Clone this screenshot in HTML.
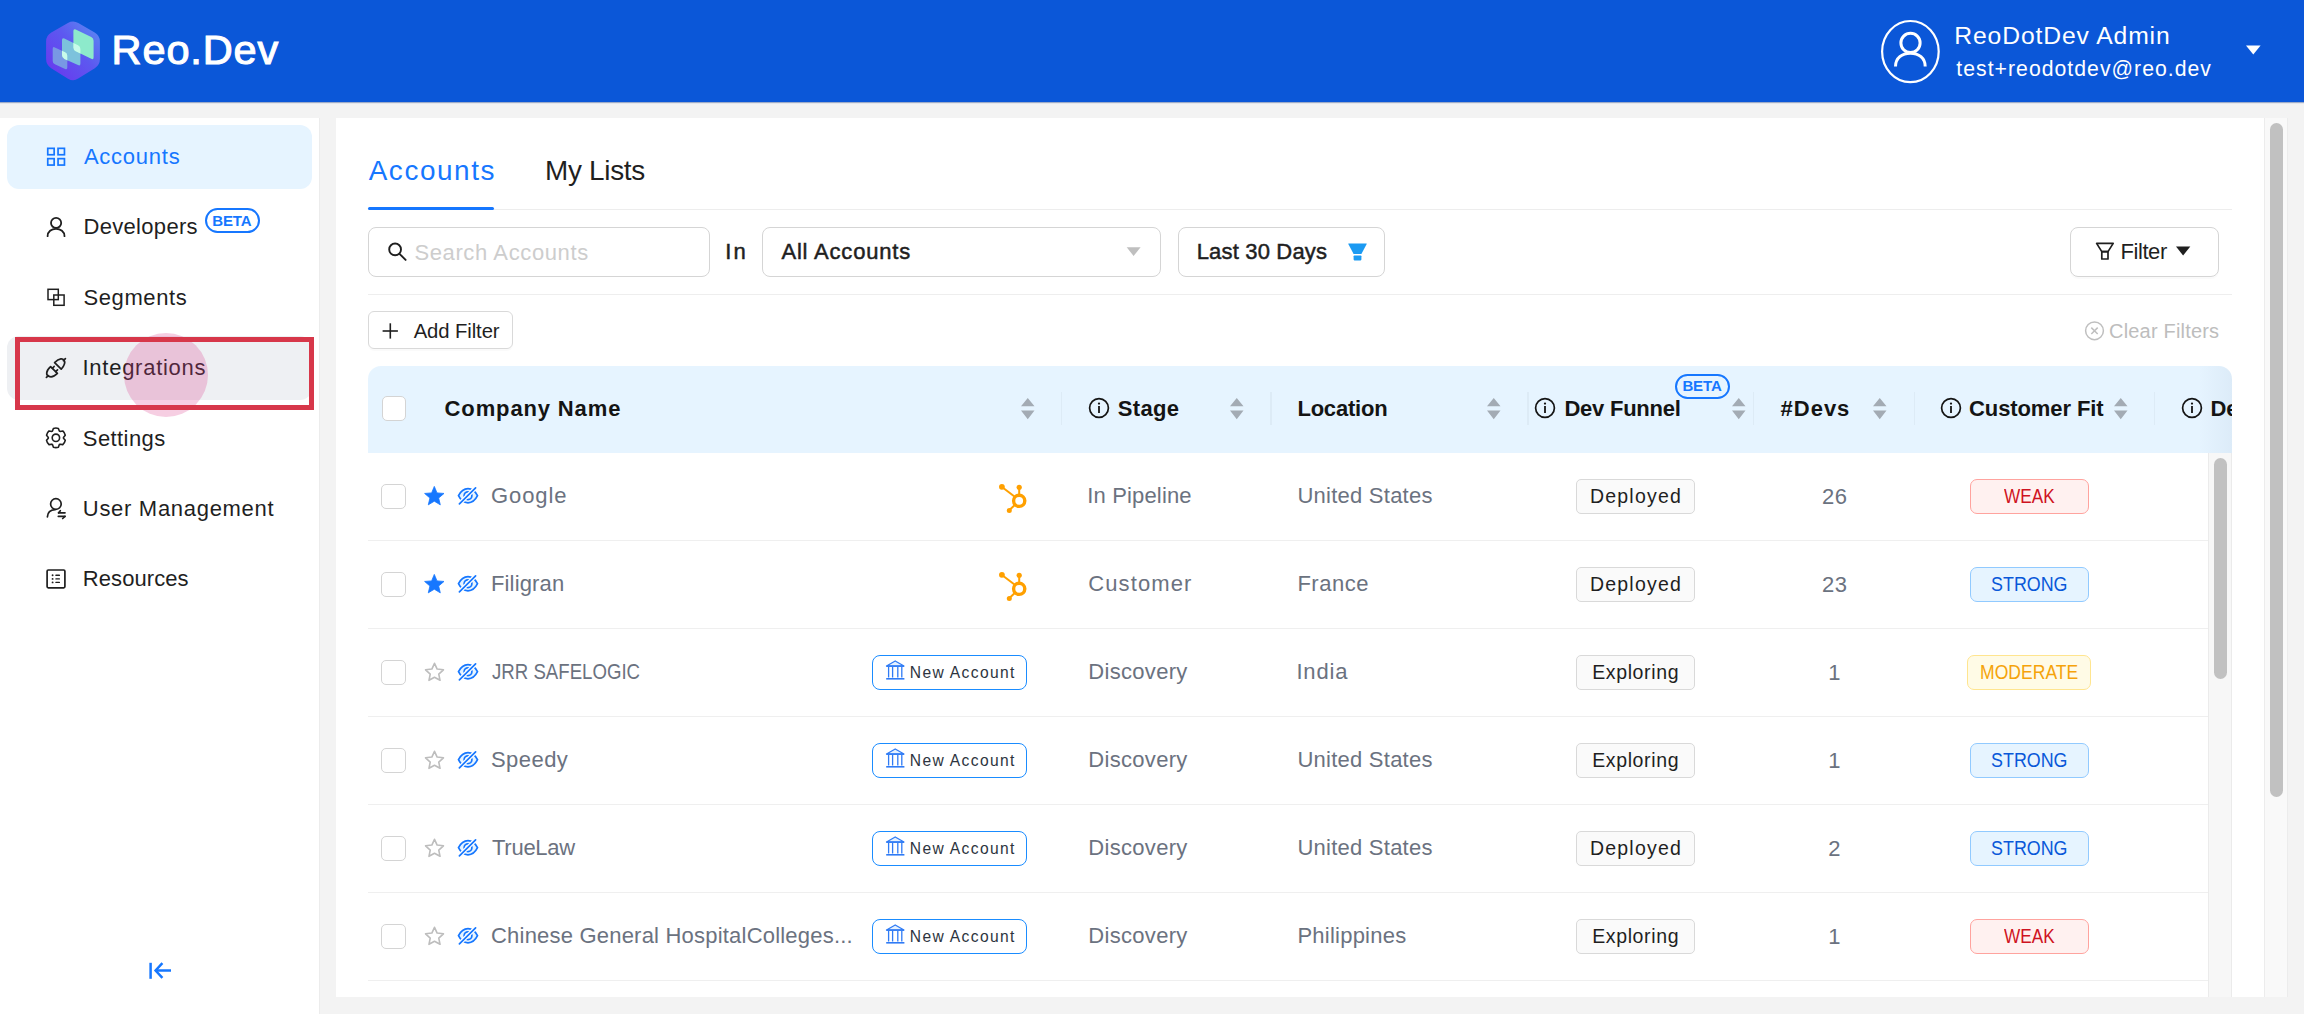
<!DOCTYPE html>
<html><head><meta charset="utf-8"><style>
html,body{margin:0;padding:0;}
body{width:2304px;height:1014px;overflow:hidden;position:relative;background:#f3f3f3;font-family:"Liberation Sans",sans-serif;}
.t{position:absolute;white-space:nowrap;line-height:1;}
svg{overflow:visible;}
</style></head><body>
<div style="position:absolute;left:0.00px;top:0.00px;width:2304.00px;height:102.00px;box-sizing:border-box;background:#0b57d8;box-shadow:0 1px 1px rgba(0,40,120,0.35);"></div>
<div style="position:absolute;left:0.00px;top:118.00px;width:318.50px;height:896.00px;box-sizing:border-box;background:#fff;border-right:1.5px solid #ececec;width:320px;"></div>
<div style="position:absolute;left:336.00px;top:118.00px;width:1928.00px;height:879.00px;box-sizing:border-box;background:#fff;"></div>
<div style="position:absolute;left:2264.00px;top:118.00px;width:24.00px;height:879.00px;box-sizing:border-box;background:#f9f9f9;border-left:1px solid #ececec;border-right:1px solid #ececec;"></div>
<div style="position:absolute;left:2270.00px;top:123.00px;width:13.30px;height:674.00px;box-sizing:border-box;background:#c1c1c1;border-radius:7px;"></div>
<svg style="position:absolute;left:46px;top:21px;" width="60" height="64" viewBox="0 0 60 64">
<defs><linearGradient id="hg" x1="0" y1="1" x2="1" y2="0"><stop offset="0" stop-color="#6b33ee"/><stop offset="0.55" stop-color="#5d58f0"/><stop offset="1" stop-color="#5b90f2"/></linearGradient>
<clipPath id="cg"><path d="M73.40 31.00 Q73.40 28.40 75.74 29.53 L91.26 37.07 Q93.60 38.20 93.60 40.80 L93.60 57.40 Q93.60 60.00 91.26 58.87 L75.74 51.33 Q73.40 50.20 73.40 47.60 Z"/></clipPath><clipPath id="cm"><path d="M62.00 40.00 Q62.00 37.40 64.34 38.54 L78.06 45.26 Q80.40 46.40 80.40 49.00 L80.40 63.60 Q80.40 66.20 78.03 65.12 L64.37 58.88 Q62.00 57.80 62.00 55.20 Z"/></clipPath></defs>
<g transform="translate(-46,-21)">
<path d="M67.89 22.97 Q73.10 20.00 78.30 22.99 L94.70 32.41 Q99.90 35.40 99.90 41.40 L99.90 59.00 Q99.90 65.00 94.82 68.19 L78.18 78.61 Q73.10 81.80 68.01 78.63 L51.19 68.17 Q46.10 65.00 46.10 59.00 L46.10 41.40 Q46.10 35.40 51.31 32.43 Z" fill="url(#hg)"/>
<path d="M52.70 48.80 Q52.70 46.40 54.87 47.43 L65.13 52.27 Q67.30 53.30 67.30 55.70 L67.30 67.60 Q67.30 70.00 65.12 69.00 L54.88 64.30 Q52.70 63.30 52.70 60.90 Z" fill="#7898e4"/>
<path d="M62.00 40.00 Q62.00 37.40 64.34 38.54 L78.06 45.26 Q80.40 46.40 80.40 49.00 L80.40 63.60 Q80.40 66.20 78.03 65.12 L64.37 58.88 Q62.00 57.80 62.00 55.20 Z" fill="#7cc2dc"/>
<path d="M73.40 31.00 Q73.40 28.40 75.74 29.53 L91.26 37.07 Q93.60 38.20 93.60 40.80 L93.60 57.40 Q93.60 60.00 91.26 58.87 L75.74 51.33 Q73.40 50.20 73.40 47.60 Z" fill="#8deacb"/>
<path d="M62.00 40.00 Q62.00 37.40 64.34 38.54 L78.06 45.26 Q80.40 46.40 80.40 49.00 L80.40 63.60 Q80.40 66.20 78.03 65.12 L64.37 58.88 Q62.00 57.80 62.00 55.20 Z" fill="#c8fcea" clip-path="url(#cg)"/>
<path d="M52.70 48.80 Q52.70 46.40 54.87 47.43 L65.13 52.27 Q67.30 53.30 67.30 55.70 L67.30 67.60 Q67.30 70.00 65.12 69.00 L54.88 64.30 Q52.70 63.30 52.70 60.90 Z" fill="#c8fcea" clip-path="url(#cm)"/>
</g></svg>
<div class="t" style="left:111.60px;top:29.00px;font-size:41.5px;color:#fff;letter-spacing:0.867px;-webkit-text-stroke:1.1px #fff;">Reo.Dev</div>
<svg style="position:absolute;left:1878px;top:17px;" width="66" height="70" viewBox="0 0 66 70"><ellipse cx="32.4" cy="34.6" rx="28.3" ry="30.6" fill="none" stroke="#fff" stroke-width="2.2"/>
<circle cx="32.5" cy="25.9" r="9.6" fill="none" stroke="#fff" stroke-width="3"/>
<path d="M17.5 49.6 C17.5 41 24 36.2 32.4 36.2 C40.8 36.2 47.2 41 47.2 49.6" fill="none" stroke="#fff" stroke-width="3"/></svg>
<div class="t" style="left:1954.30px;top:24.00px;font-size:24.7px;color:#fff;letter-spacing:0.879px;">ReoDotDev Admin</div>
<div class="t" style="left:1956.30px;top:58.00px;font-size:21.2px;color:#fff;letter-spacing:1.033px;">test+reodotdev@reo.dev</div>
<svg style="position:absolute;left:2240px;top:40px;" width="26" height="20" viewBox="0 0 26 20"><path d="M6 5.6 L20.6 5.6 L13.3 14.5 Z" fill="#fff"/></svg>
<div style="position:absolute;left:6.50px;top:124.70px;width:305.50px;height:64.00px;box-sizing:border-box;background:#e6f4ff;border-radius:12px;"></div>
<div style="position:absolute;left:6.50px;top:335.50px;width:305.50px;height:64.00px;box-sizing:border-box;background:#eef0f3;border-radius:12px;"></div>
<svg style="position:absolute;left:40px;top:141px;" width="32" height="32" viewBox="0 0 32 32"><g fill="none" stroke="#1677ff" stroke-width="1.7">
<rect x="7.75" y="7.35" width="6.4" height="6.4"/><rect x="18.05" y="7.35" width="6.4" height="6.4"/>
<rect x="7.75" y="17.65" width="6.4" height="6.4"/><rect x="18.05" y="17.65" width="6.4" height="6.4"/></g></svg>
<svg style="position:absolute;left:40px;top:210px;" width="32" height="32" viewBox="0 0 32 32"><g fill="none" stroke="#1f1f1f" stroke-width="1.8" stroke-linecap="round">
<circle cx="16.1" cy="12.9" r="5.1"/>
<path d="M7.6 26.2 C7.6 21.6 11.4 18.8 16 18.8 C20.6 18.8 24.5 21.6 24.5 26.2"/></g></svg>
<svg style="position:absolute;left:40px;top:281px;" width="32" height="32" viewBox="0 0 32 32"><g fill="none" stroke="#1f1f1f" stroke-width="1.5">
<rect x="8" y="8.3" width="10.3" height="10.3"/><rect x="13.8" y="14" width="10.3" height="10.3"/></g></svg>
<svg style="position:absolute;left:40px;top:352px;" width="32" height="32" viewBox="0 0 32 32"><g fill="none" stroke="#1f1f1f" stroke-width="1.7" stroke-linecap="round" stroke-linejoin="round">
<path d="M10.6 14.6 C5 19.6 6.5 23.5 8.6 24.2 C11 25.4 14.6 24.2 17.4 21.4 Z"/>
<path d="M8.4 23.6 L6.4 25.4"/><path d="M12.4 16.4 L14.1 14.5"/><path d="M15.6 19.6 L17.5 17.8"/>
<path d="M14.6 10.6 C19.6 5.4 23 6.6 24 8 C25.4 10.2 24.6 13.4 21.2 17.2 Z"/>
<path d="M23.4 8.6 L25.4 6.6"/></g></svg>
<svg style="position:absolute;left:40px;top:422px;" width="32" height="32" viewBox="0 0 32 32"><g fill="none" stroke="#1f1f1f" stroke-width="1.6" stroke-linejoin="round">
<path d="M12.46 9.02 L13.41 6.43 Q15.90 5.60 18.39 6.43 L19.34 9.02 A7.6 7.6 0 0 1 20.05 9.43 L22.77 8.95 Q24.73 10.70 25.26 13.27 L23.49 15.39 A7.6 7.6 0 0 1 23.49 16.21 L25.26 18.33 Q24.73 20.90 22.77 22.65 L20.05 22.17 A7.6 7.6 0 0 1 19.34 22.58 L18.39 25.17 Q15.90 26.00 13.41 25.17 L12.46 22.58 A7.6 7.6 0 0 1 11.75 22.17 L9.03 22.65 Q7.07 20.90 6.54 18.33 L8.31 16.21 A7.6 7.6 0 0 1 8.31 15.39 L6.54 13.27 Q7.07 10.70 9.03 8.95 L11.75 9.43 A7.6 7.6 0 0 1 12.46 9.02 Z"/><circle cx="15.9" cy="15.8" r="3.7"/></g></svg>
<svg style="position:absolute;left:40px;top:492px;" width="32" height="32" viewBox="0 0 32 32"><g fill="none" stroke="#1f1f1f" stroke-width="1.7" stroke-linecap="round" stroke-linejoin="round">
<circle cx="15.9" cy="12" r="5.3"/>
<path d="M7.4 24.9 C7.6 20.6 10.6 17.8 15.1 17.6"/>
<path d="M18.6 20.8 L25 20.8"/><path d="M18.6 20.8 L20.3 18.7"/>
<path d="M18.3 24.3 L25 24.3"/><path d="M25 24.3 L22.7 26.5"/></g></svg>
<svg style="position:absolute;left:40px;top:563px;" width="32" height="32" viewBox="0 0 32 32"><g fill="none" stroke="#1f1f1f" stroke-width="1.7">
<rect x="7.1" y="7" width="17.8" height="17.8" rx="1.2"/></g>
<g fill="#1f1f1f"><circle cx="12.6" cy="12.3" r="0.95"/><circle cx="12.6" cy="15.9" r="0.95"/><circle cx="12.6" cy="19.4" r="0.95"/>
<rect x="15.3" y="11.6" width="4.7" height="1.4" rx="0.6"/><rect x="15.3" y="15.2" width="4.7" height="1.4" rx="0.6"/><rect x="15.3" y="18.7" width="4.7" height="1.4" rx="0.6"/></g></svg>
<div class="t" style="left:83.90px;top:146.00px;font-size:22px;color:#1677ff;letter-spacing:0.757px;">Accounts</div>
<div class="t" style="left:83.50px;top:216.00px;font-size:22px;color:#1f1f1f;letter-spacing:0.311px;">Developers</div>
<div class="t" style="left:83.50px;top:287.00px;font-size:22px;color:#1f1f1f;letter-spacing:0.600px;">Segments</div>
<div class="t" style="left:82.50px;top:357.00px;font-size:22px;color:#1f1f1f;letter-spacing:0.736px;">Integrations</div>
<div class="t" style="left:82.80px;top:428.00px;font-size:22px;color:#1f1f1f;letter-spacing:0.414px;">Settings</div>
<div class="t" style="left:82.80px;top:498.00px;font-size:22px;color:#1f1f1f;letter-spacing:0.700px;">User Management</div>
<div class="t" style="left:82.80px;top:568.00px;font-size:22px;color:#1f1f1f;letter-spacing:0.075px;">Resources</div>
<div style="position:absolute;left:205.00px;top:208.20px;width:54.50px;height:24.60px;box-sizing:border-box;border:2px solid #1677ff;border-radius:12.5px;"></div>
<div class="t" style="left:212.20px;top:213.00px;font-size:15px;color:#1677ff;letter-spacing:-0.133px;font-weight:700;">BETA</div>
<svg style="position:absolute;left:140px;top:955px;" width="40" height="32" viewBox="0 0 40 32"><g fill="none" stroke="#1677ff" stroke-width="2.5">
<path d="M10.6 7.8 L10.6 23.8"/><path d="M15.4 15.5 L31 15.5"/><path d="M22.4 8.2 L15.6 15.5 L22.4 22.8" stroke-linejoin="miter"/></g></svg>
<div class="t" style="left:368.70px;top:157.00px;font-size:27.9px;color:#1677ff;letter-spacing:1.571px;">Accounts</div>
<div class="t" style="left:545.00px;top:157.00px;font-size:27.9px;color:#1f1f1f;letter-spacing:-0.286px;">My Lists</div>
<div style="position:absolute;left:368.00px;top:208.70px;width:1863.70px;height:1.30px;box-sizing:border-box;background:#ededed;"></div>
<div style="position:absolute;left:368.00px;top:207.00px;width:126.20px;height:3.20px;box-sizing:border-box;background:#1677ff;border-radius:2px;"></div>
<div style="position:absolute;left:368.20px;top:226.50px;width:341.40px;height:50.30px;box-sizing:border-box;border:1.6px solid #d5d5d5;border-radius:8px;"></div>
<svg style="position:absolute;left:380px;top:235px;" width="32" height="32" viewBox="0 0 32 32"><g fill="none" stroke="#1f1f1f" stroke-width="1.9" stroke-linecap="round"><circle cx="15.1" cy="14.4" r="5.9"/><path d="M19.5 18.8 L25.6 24.9"/></g></svg>
<div class="t" style="left:414.40px;top:242.00px;font-size:22px;color:#cdcdcd;letter-spacing:0.621px;">Search Accounts</div>
<div class="t" style="left:725.30px;top:241.00px;font-size:22px;color:#1f1f1f;letter-spacing:2.000px;-webkit-text-stroke:0.5px #1f1f1f;">In</div>
<div style="position:absolute;left:762.20px;top:226.60px;width:399.00px;height:50.20px;box-sizing:border-box;border:1.6px solid #d5d5d5;border-radius:8px;"></div>
<div class="t" style="left:781.40px;top:241.00px;font-size:22px;color:#1f1f1f;letter-spacing:0.818px;-webkit-text-stroke:0.5px #1f1f1f;">All Accounts</div>
<svg style="position:absolute;left:1120px;top:240px;" width="26" height="20" viewBox="0 0 26 20"><path d="M6.7 7.3 L20.6 7.3 L13.6 16 Z" fill="#bfbfbf"/></svg>
<div style="position:absolute;left:1178.10px;top:226.60px;width:206.90px;height:50.20px;box-sizing:border-box;border:1.6px solid #d5d5d5;border-radius:8px;"></div>
<div class="t" style="left:1196.70px;top:241.00px;font-size:22px;color:#1f1f1f;letter-spacing:0.173px;-webkit-text-stroke:0.5px #1f1f1f;">Last 30 Days</div>
<svg style="position:absolute;left:1340px;top:238px;" width="32" height="28" viewBox="0 0 32 28"><path d="M8.6 5.4 Q8 5.4 8.3 6 L13.6 16 L21.4 16 L26.7 6 Q27 5.4 26.4 5.4 Z" fill="#1b9af2"/><rect x="13.6" y="17.4" width="7.8" height="5" rx="0.8" fill="#1b9af2"/></svg>
<div style="position:absolute;left:2069.60px;top:226.60px;width:149.00px;height:50.20px;box-sizing:border-box;border:1.6px solid #d5d5d5;border-radius:8px;box-shadow:0 2px 0 rgba(0,0,0,0.02);"></div>
<svg style="position:absolute;left:2090px;top:238px;" width="32" height="28" viewBox="0 0 32 28"><g fill="none" stroke="#1f1f1f" stroke-width="1.7" stroke-linejoin="round"><path d="M6.6 5.4 L23.2 5.4 L18 13.6 L11.8 13.6 Z"/><rect x="11.8" y="13.6" width="6.2" height="7.4"/></g></svg>
<div class="t" style="left:2120.40px;top:241.00px;font-size:22px;color:#1f1f1f;letter-spacing:-0.400px;">Filter</div>
<svg style="position:absolute;left:2170px;top:240px;" width="26" height="20" viewBox="0 0 26 20"><path d="M6 6.4 L20.3 6.4 L13.1 15.4 Z" fill="#1f1f1f"/></svg>
<div style="position:absolute;left:368.00px;top:293.50px;width:1863.70px;height:1.30px;box-sizing:border-box;background:#eeeeee;"></div>
<div style="position:absolute;left:368.40px;top:311.40px;width:144.30px;height:37.20px;box-sizing:border-box;border:1.6px solid #d9d9d9;border-radius:6px;box-shadow:0 2px 0 rgba(0,0,0,0.02);"></div>
<svg style="position:absolute;left:375px;top:316px;" width="32" height="32" viewBox="0 0 32 32"><g stroke="#1f1f1f" stroke-width="1.6"><path d="M15.3 7.3 L15.3 22.6"/><path d="M7.6 15 L22.9 15"/></g></svg>
<div class="t" style="left:413.70px;top:321.00px;font-size:20.3px;color:#1f1f1f;letter-spacing:-0.100px;">Add Filter</div>
<svg style="position:absolute;left:2080px;top:316px;" width="32" height="30" viewBox="0 0 32 30"><g fill="none" stroke="#bfbfbf" stroke-width="1.5"><circle cx="14.5" cy="14.8" r="8.9"/><path d="M11.3 11.6 L17.7 18 M17.7 11.6 L11.3 18"/></g></svg>
<div class="t" style="left:2109.00px;top:321.00px;font-size:20px;color:#bdbdbd;letter-spacing:0.192px;">Clear Filters</div>
<div style="position:absolute;left:368.00px;top:365.50px;width:1864.00px;height:87.10px;box-sizing:border-box;background:linear-gradient(90deg,#e6f4ff 0,#e6f4ff 98.2%,#dcebf8 100%);border-radius:13px 13px 0 0;"></div>
<div style="position:absolute;left:381.50px;top:396.20px;width:24.40px;height:24.50px;box-sizing:border-box;background:#fff;border:1.7px solid #d4d4d4;border-radius:5px;"></div>
<div class="t" style="left:444.60px;top:398.00px;font-size:22px;color:#141414;letter-spacing:0.864px;font-weight:700;">Company Name</div>
<div class="t" style="left:1117.80px;top:398.00px;font-size:22px;color:#141414;letter-spacing:0.300px;font-weight:700;">Stage</div>
<div class="t" style="left:1297.40px;top:398.00px;font-size:22px;color:#141414;letter-spacing:-0.200px;font-weight:700;">Location</div>
<div class="t" style="left:1564.40px;top:398.00px;font-size:22px;color:#141414;letter-spacing:-0.233px;font-weight:700;">Dev Funnel</div>
<div class="t" style="left:1780.60px;top:398.00px;font-size:22px;color:#141414;letter-spacing:0.975px;font-weight:700;">#Devs</div>
<div class="t" style="left:1969.00px;top:398.00px;font-size:22px;color:#141414;letter-spacing:-0.091px;font-weight:700;">Customer Fit</div>
<div style="position:absolute;left:2205px;top:380px;width:27px;height:60px;overflow:hidden;">
<div class="t" style="left:5.40px;top:18.00px;font-size:22px;color:#141414;font-weight:700;">Developers</div>
</div>
<svg style="position:absolute;left:1018.6px;top:394px;" width="18" height="30" viewBox="0 0 18 30"><path d="M2 12.2 L15.5 12.2 L8.75 4 Z M2 16.6 L15.5 16.6 L8.75 25.2 Z" fill="#a3abb4"/></svg>
<svg style="position:absolute;left:1227.8px;top:394px;" width="18" height="30" viewBox="0 0 18 30"><path d="M2 12.2 L15.5 12.2 L8.75 4 Z M2 16.6 L15.5 16.6 L8.75 25.2 Z" fill="#a3abb4"/></svg>
<svg style="position:absolute;left:1484.8px;top:394px;" width="18" height="30" viewBox="0 0 18 30"><path d="M2 12.2 L15.5 12.2 L8.75 4 Z M2 16.6 L15.5 16.6 L8.75 25.2 Z" fill="#a3abb4"/></svg>
<svg style="position:absolute;left:1729.8px;top:394px;" width="18" height="30" viewBox="0 0 18 30"><path d="M2 12.2 L15.5 12.2 L8.75 4 Z M2 16.6 L15.5 16.6 L8.75 25.2 Z" fill="#a3abb4"/></svg>
<svg style="position:absolute;left:1870.8px;top:394px;" width="18" height="30" viewBox="0 0 18 30"><path d="M2 12.2 L15.5 12.2 L8.75 4 Z M2 16.6 L15.5 16.6 L8.75 25.2 Z" fill="#a3abb4"/></svg>
<svg style="position:absolute;left:2111.7px;top:394px;" width="18" height="30" viewBox="0 0 18 30"><path d="M2 12.2 L15.5 12.2 L8.75 4 Z M2 16.6 L15.5 16.6 L8.75 25.2 Z" fill="#a3abb4"/></svg>
<div style="position:absolute;left:1060.85px;top:392.00px;width:1.50px;height:33.30px;box-sizing:border-box;background:rgba(0,0,0,0.035);"></div>
<div style="position:absolute;left:1270.45px;top:392.00px;width:1.50px;height:33.30px;box-sizing:border-box;background:rgba(0,0,0,0.035);"></div>
<div style="position:absolute;left:1527.25px;top:392.00px;width:1.50px;height:33.30px;box-sizing:border-box;background:rgba(0,0,0,0.035);"></div>
<div style="position:absolute;left:1752.95px;top:392.00px;width:1.50px;height:33.30px;box-sizing:border-box;background:rgba(0,0,0,0.035);"></div>
<div style="position:absolute;left:1913.75px;top:392.00px;width:1.50px;height:33.30px;box-sizing:border-box;background:rgba(0,0,0,0.035);"></div>
<div style="position:absolute;left:2153.75px;top:392.00px;width:1.50px;height:33.30px;box-sizing:border-box;background:rgba(0,0,0,0.035);"></div>
<svg style="position:absolute;left:1084.5px;top:393.6px;" width="28" height="28" viewBox="0 0 28 28"><circle cx="14" cy="14" r="9.4" fill="none" stroke="#141414" stroke-width="1.7"/><circle cx="14" cy="9.6" r="1.15" fill="#141414"/><rect x="13.1" y="12" width="1.8" height="7" fill="#141414"/></svg>
<svg style="position:absolute;left:1531.3px;top:393.6px;" width="28" height="28" viewBox="0 0 28 28"><circle cx="14" cy="14" r="9.4" fill="none" stroke="#141414" stroke-width="1.7"/><circle cx="14" cy="9.6" r="1.15" fill="#141414"/><rect x="13.1" y="12" width="1.8" height="7" fill="#141414"/></svg>
<svg style="position:absolute;left:1937px;top:393.6px;" width="28" height="28" viewBox="0 0 28 28"><circle cx="14" cy="14" r="9.4" fill="none" stroke="#141414" stroke-width="1.7"/><circle cx="14" cy="9.6" r="1.15" fill="#141414"/><rect x="13.1" y="12" width="1.8" height="7" fill="#141414"/></svg>
<svg style="position:absolute;left:2177.8px;top:393.6px;" width="28" height="28" viewBox="0 0 28 28"><circle cx="14" cy="14" r="9.4" fill="none" stroke="#141414" stroke-width="1.7"/><circle cx="14" cy="9.6" r="1.15" fill="#141414"/><rect x="13.1" y="12" width="1.8" height="7" fill="#141414"/></svg>
<div style="position:absolute;left:1675.40px;top:373.70px;width:54.30px;height:24.90px;box-sizing:border-box;border:2px solid #1677ff;border-radius:12.5px;"></div>
<div class="t" style="left:1682.40px;top:378.00px;font-size:15px;color:#1677ff;letter-spacing:-0.133px;font-weight:700;">BETA</div>
<div style="position:absolute;left:2208.00px;top:452.60px;width:24.00px;height:544.40px;box-sizing:border-box;background:#f7f7f7;border-left:1px solid #ebebeb;border-right:1px solid #ebebeb;"></div>
<div style="position:absolute;left:2214.30px;top:457.80px;width:12.90px;height:220.90px;box-sizing:border-box;background:#c1c1c1;border-radius:6.5px;"></div>
<div style="position:absolute;left:368.00px;top:540.00px;width:1840.00px;height:1.30px;box-sizing:border-box;background:#efefef;"></div>
<div style="position:absolute;left:381.10px;top:484.20px;width:24.50px;height:24.80px;box-sizing:border-box;background:#fff;border:1.7px solid #d4d4d4;border-radius:5px;"></div>
<svg style="position:absolute;left:420px;top:480px;" width="30" height="30" viewBox="0 0 30 30"><path d="M14.30 6.40 L17.00 12.88 L24.00 13.45 L18.67 18.02 L20.30 24.85 L14.30 21.20 L8.30 24.85 L9.93 18.02 L4.60 13.45 L11.60 12.88 Z" fill="#1677ff" stroke="#1677ff" stroke-width="0.8" stroke-linejoin="round"/></svg>
<svg style="position:absolute;left:448px;top:480px;" width="40" height="32" viewBox="0 0 40 32"><path d="M10.5 15.7 C13 10.6 16.8 8.6 20 8.6 C23.2 8.6 27 10.6 29.5 15.7 C27 20.8 23.2 22.8 20 22.8 C16.8 22.8 13 20.8 10.5 15.7 Z" fill="#e6f4ff" stroke="#1677ff" stroke-width="1.7"/>
<circle cx="20" cy="15.7" r="3.9" fill="none" stroke="#1677ff" stroke-width="1.7"/>
<path d="M27.6 7.8 L11.4 23.8" stroke="#fff" stroke-width="4.2"/>
<path d="M27.6 7.8 L11.4 23.8" stroke="#1677ff" stroke-width="1.7" stroke-linecap="round"/></svg>
<div class="t" style="left:491.00px;top:485.00px;font-size:22px;color:#6b7280;letter-spacing:0.900px;">Google</div>
<svg style="position:absolute;left:995px;top:480px;" width="36" height="36" viewBox="0 0 36 36"><g fill="#ffa000" stroke="#ffa000">
<circle cx="24.2" cy="20.8" r="5.6" fill="none" stroke-width="3.4"/>
<circle cx="24.2" cy="7.3" r="2.6" stroke="none"/><path d="M24.2 8 L24.2 15" stroke-width="2"/>
<circle cx="6.9" cy="6.8" r="2.9" stroke="none"/><path d="M7.3 7.2 L19.8 16.8" stroke-width="2"/>
<circle cx="14.3" cy="30.4" r="2.5" stroke="none"/><path d="M14.5 30 L20.3 24.6" stroke-width="2"/></g></svg>
<div class="t" style="left:1087.30px;top:485.00px;font-size:22px;color:#6b7280;letter-spacing:0.150px;">In Pipeline</div>
<div class="t" style="left:1297.40px;top:485.00px;font-size:22px;color:#6b7280;letter-spacing:0.250px;">United States</div>
<div style="position:absolute;left:1575.60px;top:479.20px;width:119.30px;height:34.40px;box-sizing:border-box;background:#fafafa;border:1.6px solid #d9d9d9;border-radius:5px;"></div>
<div class="t" style="left:1589.95px;top:487.00px;font-size:19.5px;color:#1f1f1f;letter-spacing:1.214px;">Deployed</div>
<div class="t" style="left:1822.10px;top:486.00px;font-size:22px;color:#6b7280;letter-spacing:0.400px;">26</div>
<div style="position:absolute;left:1970.00px;top:479.00px;width:119.30px;height:34.60px;box-sizing:border-box;background:#fff1f0;border:1.6px solid #ffa39e;border-radius:7px;"></div>
<div class="t" style="left:2004.20px;top:487.00px;font-size:19.3px;color:#cf1322;transform:scaleX(0.8912);transform-origin:0.00px 0;">WEAK</div>
<div style="position:absolute;left:368.00px;top:628.00px;width:1840.00px;height:1.30px;box-sizing:border-box;background:#efefef;"></div>
<div style="position:absolute;left:381.10px;top:572.20px;width:24.50px;height:24.80px;box-sizing:border-box;background:#fff;border:1.7px solid #d4d4d4;border-radius:5px;"></div>
<svg style="position:absolute;left:420px;top:568px;" width="30" height="30" viewBox="0 0 30 30"><path d="M14.30 6.40 L17.00 12.88 L24.00 13.45 L18.67 18.02 L20.30 24.85 L14.30 21.20 L8.30 24.85 L9.93 18.02 L4.60 13.45 L11.60 12.88 Z" fill="#1677ff" stroke="#1677ff" stroke-width="0.8" stroke-linejoin="round"/></svg>
<svg style="position:absolute;left:448px;top:568px;" width="40" height="32" viewBox="0 0 40 32"><path d="M10.5 15.7 C13 10.6 16.8 8.6 20 8.6 C23.2 8.6 27 10.6 29.5 15.7 C27 20.8 23.2 22.8 20 22.8 C16.8 22.8 13 20.8 10.5 15.7 Z" fill="#e6f4ff" stroke="#1677ff" stroke-width="1.7"/>
<circle cx="20" cy="15.7" r="3.9" fill="none" stroke="#1677ff" stroke-width="1.7"/>
<path d="M27.6 7.8 L11.4 23.8" stroke="#fff" stroke-width="4.2"/>
<path d="M27.6 7.8 L11.4 23.8" stroke="#1677ff" stroke-width="1.7" stroke-linecap="round"/></svg>
<div class="t" style="left:491.00px;top:573.00px;font-size:22px;color:#6b7280;letter-spacing:0.143px;">Filigran</div>
<svg style="position:absolute;left:995px;top:568px;" width="36" height="36" viewBox="0 0 36 36"><g fill="#ffa000" stroke="#ffa000">
<circle cx="24.2" cy="20.8" r="5.6" fill="none" stroke-width="3.4"/>
<circle cx="24.2" cy="7.3" r="2.6" stroke="none"/><path d="M24.2 8 L24.2 15" stroke-width="2"/>
<circle cx="6.9" cy="6.8" r="2.9" stroke="none"/><path d="M7.3 7.2 L19.8 16.8" stroke-width="2"/>
<circle cx="14.3" cy="30.4" r="2.5" stroke="none"/><path d="M14.5 30 L20.3 24.6" stroke-width="2"/></g></svg>
<div class="t" style="left:1088.30px;top:573.00px;font-size:22px;color:#6b7280;letter-spacing:1.100px;">Customer</div>
<div class="t" style="left:1297.40px;top:573.00px;font-size:22px;color:#6b7280;letter-spacing:0.500px;">France</div>
<div style="position:absolute;left:1575.60px;top:567.20px;width:119.30px;height:34.40px;box-sizing:border-box;background:#fafafa;border:1.6px solid #d9d9d9;border-radius:5px;"></div>
<div class="t" style="left:1589.95px;top:575.00px;font-size:19.5px;color:#1f1f1f;letter-spacing:1.214px;">Deployed</div>
<div class="t" style="left:1822.10px;top:574.00px;font-size:22px;color:#6b7280;letter-spacing:0.400px;">23</div>
<div style="position:absolute;left:1970.00px;top:567.00px;width:119.30px;height:34.60px;box-sizing:border-box;background:#e6f4ff;border:1.6px solid #91caff;border-radius:7px;"></div>
<div class="t" style="left:1991.35px;top:575.00px;font-size:19.3px;color:#0958d9;transform:scaleX(0.9262);transform-origin:1.00px 0;">STRONG</div>
<div style="position:absolute;left:368.00px;top:716.00px;width:1840.00px;height:1.30px;box-sizing:border-box;background:#efefef;"></div>
<div style="position:absolute;left:381.10px;top:660.20px;width:24.50px;height:24.80px;box-sizing:border-box;background:#fff;border:1.7px solid #d4d4d4;border-radius:5px;"></div>
<svg style="position:absolute;left:420px;top:656px;" width="30" height="30" viewBox="0 0 30 30"><path d="M14.50 7.30 L17.15 13.06 L23.44 13.80 L18.78 18.09 L20.03 24.30 L14.50 21.20 L8.97 24.30 L10.22 18.09 L5.56 13.80 L11.85 13.06 Z" fill="none" stroke="#bdbdbd" stroke-width="1.6" stroke-linejoin="round"/></svg>
<svg style="position:absolute;left:448px;top:656px;" width="40" height="32" viewBox="0 0 40 32"><path d="M10.5 15.7 C13 10.6 16.8 8.6 20 8.6 C23.2 8.6 27 10.6 29.5 15.7 C27 20.8 23.2 22.8 20 22.8 C16.8 22.8 13 20.8 10.5 15.7 Z" fill="#e6f4ff" stroke="#1677ff" stroke-width="1.7"/>
<circle cx="20" cy="15.7" r="3.9" fill="none" stroke="#1677ff" stroke-width="1.7"/>
<path d="M27.6 7.8 L11.4 23.8" stroke="#fff" stroke-width="4.2"/>
<path d="M27.6 7.8 L11.4 23.8" stroke="#1677ff" stroke-width="1.7" stroke-linecap="round"/></svg>
<div class="t" style="left:492.00px;top:661.00px;font-size:22px;color:#6b7280;transform:scaleX(0.8471);transform-origin:0.00px 0;">JRR SAFELOGIC</div>
<div style="position:absolute;left:872.10px;top:655.00px;width:154.70px;height:34.90px;box-sizing:border-box;border:1.6px solid #1a8cff;border-radius:8px;"></div>
<svg style="position:absolute;left:880px;top:656px;" width="30" height="30" viewBox="0 0 30 30"><g fill="none" stroke="#2f7bf5" stroke-width="1.3">
<path d="M6.5 10 L15.2 5 L24 10 Z" fill="#e6f2ff" stroke-linejoin="round"/>
<path d="M6.5 10.2 L24 10.2"/><path d="M6.2 22.8 L24.4 22.8" stroke-width="1.6"/>
<path d="M8.6 11 L8.6 21.5 M12.6 11 L12.6 21.5 M17.8 11 L17.8 21.5 M21.8 11 L21.8 21.5"/></g></svg>
<div class="t" style="left:909.80px;top:665.00px;font-size:15.6px;color:#2d3440;letter-spacing:1.350px;">New Account</div>
<div class="t" style="left:1088.30px;top:661.00px;font-size:22px;color:#6b7280;letter-spacing:0.312px;">Discovery</div>
<div class="t" style="left:1296.40px;top:661.00px;font-size:22px;color:#6b7280;letter-spacing:0.850px;">India</div>
<div style="position:absolute;left:1575.60px;top:655.20px;width:119.30px;height:34.40px;box-sizing:border-box;background:#fafafa;border:1.6px solid #d9d9d9;border-radius:5px;"></div>
<div class="t" style="left:1592.15px;top:663.00px;font-size:19.5px;color:#1f1f1f;letter-spacing:0.637px;">Exploring</div>
<div class="t" style="left:1828.30px;top:662.00px;font-size:22px;color:#6b7280;">1</div>
<div style="position:absolute;left:1967.40px;top:655.00px;width:123.40px;height:34.60px;box-sizing:border-box;background:#fffbe6;border:1.6px solid #ffe58f;border-radius:7px;"></div>
<div class="t" style="left:1980.25px;top:663.00px;font-size:19.3px;color:#f5a30a;transform:scaleX(0.9104);transform-origin:1.00px 0;">MODERATE</div>
<div style="position:absolute;left:368.00px;top:804.00px;width:1840.00px;height:1.30px;box-sizing:border-box;background:#efefef;"></div>
<div style="position:absolute;left:381.10px;top:748.20px;width:24.50px;height:24.80px;box-sizing:border-box;background:#fff;border:1.7px solid #d4d4d4;border-radius:5px;"></div>
<svg style="position:absolute;left:420px;top:744px;" width="30" height="30" viewBox="0 0 30 30"><path d="M14.50 7.30 L17.15 13.06 L23.44 13.80 L18.78 18.09 L20.03 24.30 L14.50 21.20 L8.97 24.30 L10.22 18.09 L5.56 13.80 L11.85 13.06 Z" fill="none" stroke="#bdbdbd" stroke-width="1.6" stroke-linejoin="round"/></svg>
<svg style="position:absolute;left:448px;top:744px;" width="40" height="32" viewBox="0 0 40 32"><path d="M10.5 15.7 C13 10.6 16.8 8.6 20 8.6 C23.2 8.6 27 10.6 29.5 15.7 C27 20.8 23.2 22.8 20 22.8 C16.8 22.8 13 20.8 10.5 15.7 Z" fill="#e6f4ff" stroke="#1677ff" stroke-width="1.7"/>
<circle cx="20" cy="15.7" r="3.9" fill="none" stroke="#1677ff" stroke-width="1.7"/>
<path d="M27.6 7.8 L11.4 23.8" stroke="#fff" stroke-width="4.2"/>
<path d="M27.6 7.8 L11.4 23.8" stroke="#1677ff" stroke-width="1.7" stroke-linecap="round"/></svg>
<div class="t" style="left:491.00px;top:749.00px;font-size:22px;color:#6b7280;letter-spacing:0.440px;">Speedy</div>
<div style="position:absolute;left:872.10px;top:743.00px;width:154.70px;height:34.90px;box-sizing:border-box;border:1.6px solid #1a8cff;border-radius:8px;"></div>
<svg style="position:absolute;left:880px;top:744px;" width="30" height="30" viewBox="0 0 30 30"><g fill="none" stroke="#2f7bf5" stroke-width="1.3">
<path d="M6.5 10 L15.2 5 L24 10 Z" fill="#e6f2ff" stroke-linejoin="round"/>
<path d="M6.5 10.2 L24 10.2"/><path d="M6.2 22.8 L24.4 22.8" stroke-width="1.6"/>
<path d="M8.6 11 L8.6 21.5 M12.6 11 L12.6 21.5 M17.8 11 L17.8 21.5 M21.8 11 L21.8 21.5"/></g></svg>
<div class="t" style="left:909.80px;top:753.00px;font-size:15.6px;color:#2d3440;letter-spacing:1.350px;">New Account</div>
<div class="t" style="left:1088.30px;top:749.00px;font-size:22px;color:#6b7280;letter-spacing:0.312px;">Discovery</div>
<div class="t" style="left:1297.40px;top:749.00px;font-size:22px;color:#6b7280;letter-spacing:0.250px;">United States</div>
<div style="position:absolute;left:1575.60px;top:743.20px;width:119.30px;height:34.40px;box-sizing:border-box;background:#fafafa;border:1.6px solid #d9d9d9;border-radius:5px;"></div>
<div class="t" style="left:1592.15px;top:751.00px;font-size:19.5px;color:#1f1f1f;letter-spacing:0.637px;">Exploring</div>
<div class="t" style="left:1828.30px;top:750.00px;font-size:22px;color:#6b7280;">1</div>
<div style="position:absolute;left:1970.00px;top:743.00px;width:119.30px;height:34.60px;box-sizing:border-box;background:#e6f4ff;border:1.6px solid #91caff;border-radius:7px;"></div>
<div class="t" style="left:1991.35px;top:751.00px;font-size:19.3px;color:#0958d9;transform:scaleX(0.9262);transform-origin:1.00px 0;">STRONG</div>
<div style="position:absolute;left:368.00px;top:892.00px;width:1840.00px;height:1.30px;box-sizing:border-box;background:#efefef;"></div>
<div style="position:absolute;left:381.10px;top:836.20px;width:24.50px;height:24.80px;box-sizing:border-box;background:#fff;border:1.7px solid #d4d4d4;border-radius:5px;"></div>
<svg style="position:absolute;left:420px;top:832px;" width="30" height="30" viewBox="0 0 30 30"><path d="M14.50 7.30 L17.15 13.06 L23.44 13.80 L18.78 18.09 L20.03 24.30 L14.50 21.20 L8.97 24.30 L10.22 18.09 L5.56 13.80 L11.85 13.06 Z" fill="none" stroke="#bdbdbd" stroke-width="1.6" stroke-linejoin="round"/></svg>
<svg style="position:absolute;left:448px;top:832px;" width="40" height="32" viewBox="0 0 40 32"><path d="M10.5 15.7 C13 10.6 16.8 8.6 20 8.6 C23.2 8.6 27 10.6 29.5 15.7 C27 20.8 23.2 22.8 20 22.8 C16.8 22.8 13 20.8 10.5 15.7 Z" fill="#e6f4ff" stroke="#1677ff" stroke-width="1.7"/>
<circle cx="20" cy="15.7" r="3.9" fill="none" stroke="#1677ff" stroke-width="1.7"/>
<path d="M27.6 7.8 L11.4 23.8" stroke="#fff" stroke-width="4.2"/>
<path d="M27.6 7.8 L11.4 23.8" stroke="#1677ff" stroke-width="1.7" stroke-linecap="round"/></svg>
<div class="t" style="left:492.00px;top:837.00px;font-size:22px;color:#6b7280;letter-spacing:-0.267px;">TrueLaw</div>
<div style="position:absolute;left:872.10px;top:831.00px;width:154.70px;height:34.90px;box-sizing:border-box;border:1.6px solid #1a8cff;border-radius:8px;"></div>
<svg style="position:absolute;left:880px;top:832px;" width="30" height="30" viewBox="0 0 30 30"><g fill="none" stroke="#2f7bf5" stroke-width="1.3">
<path d="M6.5 10 L15.2 5 L24 10 Z" fill="#e6f2ff" stroke-linejoin="round"/>
<path d="M6.5 10.2 L24 10.2"/><path d="M6.2 22.8 L24.4 22.8" stroke-width="1.6"/>
<path d="M8.6 11 L8.6 21.5 M12.6 11 L12.6 21.5 M17.8 11 L17.8 21.5 M21.8 11 L21.8 21.5"/></g></svg>
<div class="t" style="left:909.80px;top:841.00px;font-size:15.6px;color:#2d3440;letter-spacing:1.350px;">New Account</div>
<div class="t" style="left:1088.30px;top:837.00px;font-size:22px;color:#6b7280;letter-spacing:0.312px;">Discovery</div>
<div class="t" style="left:1297.40px;top:837.00px;font-size:22px;color:#6b7280;letter-spacing:0.250px;">United States</div>
<div style="position:absolute;left:1575.60px;top:831.20px;width:119.30px;height:34.40px;box-sizing:border-box;background:#fafafa;border:1.6px solid #d9d9d9;border-radius:5px;"></div>
<div class="t" style="left:1589.95px;top:839.00px;font-size:19.5px;color:#1f1f1f;letter-spacing:1.214px;">Deployed</div>
<div class="t" style="left:1828.30px;top:838.00px;font-size:22px;color:#6b7280;">2</div>
<div style="position:absolute;left:1970.00px;top:831.00px;width:119.30px;height:34.60px;box-sizing:border-box;background:#e6f4ff;border:1.6px solid #91caff;border-radius:7px;"></div>
<div class="t" style="left:1991.35px;top:839.00px;font-size:19.3px;color:#0958d9;transform:scaleX(0.9262);transform-origin:1.00px 0;">STRONG</div>
<div style="position:absolute;left:368.00px;top:980.00px;width:1840.00px;height:1.30px;box-sizing:border-box;background:#efefef;"></div>
<div style="position:absolute;left:381.10px;top:924.20px;width:24.50px;height:24.80px;box-sizing:border-box;background:#fff;border:1.7px solid #d4d4d4;border-radius:5px;"></div>
<svg style="position:absolute;left:420px;top:920px;" width="30" height="30" viewBox="0 0 30 30"><path d="M14.50 7.30 L17.15 13.06 L23.44 13.80 L18.78 18.09 L20.03 24.30 L14.50 21.20 L8.97 24.30 L10.22 18.09 L5.56 13.80 L11.85 13.06 Z" fill="none" stroke="#bdbdbd" stroke-width="1.6" stroke-linejoin="round"/></svg>
<svg style="position:absolute;left:448px;top:920px;" width="40" height="32" viewBox="0 0 40 32"><path d="M10.5 15.7 C13 10.6 16.8 8.6 20 8.6 C23.2 8.6 27 10.6 29.5 15.7 C27 20.8 23.2 22.8 20 22.8 C16.8 22.8 13 20.8 10.5 15.7 Z" fill="#e6f4ff" stroke="#1677ff" stroke-width="1.7"/>
<circle cx="20" cy="15.7" r="3.9" fill="none" stroke="#1677ff" stroke-width="1.7"/>
<path d="M27.6 7.8 L11.4 23.8" stroke="#fff" stroke-width="4.2"/>
<path d="M27.6 7.8 L11.4 23.8" stroke="#1677ff" stroke-width="1.7" stroke-linecap="round"/></svg>
<div class="t" style="left:491.00px;top:925.00px;font-size:22px;color:#6b7280;letter-spacing:0.206px;">Chinese General HospitalColleges...</div>
<div style="position:absolute;left:872.10px;top:919.00px;width:154.70px;height:34.90px;box-sizing:border-box;border:1.6px solid #1a8cff;border-radius:8px;"></div>
<svg style="position:absolute;left:880px;top:920px;" width="30" height="30" viewBox="0 0 30 30"><g fill="none" stroke="#2f7bf5" stroke-width="1.3">
<path d="M6.5 10 L15.2 5 L24 10 Z" fill="#e6f2ff" stroke-linejoin="round"/>
<path d="M6.5 10.2 L24 10.2"/><path d="M6.2 22.8 L24.4 22.8" stroke-width="1.6"/>
<path d="M8.6 11 L8.6 21.5 M12.6 11 L12.6 21.5 M17.8 11 L17.8 21.5 M21.8 11 L21.8 21.5"/></g></svg>
<div class="t" style="left:909.80px;top:929.00px;font-size:15.6px;color:#2d3440;letter-spacing:1.350px;">New Account</div>
<div class="t" style="left:1088.30px;top:925.00px;font-size:22px;color:#6b7280;letter-spacing:0.312px;">Discovery</div>
<div class="t" style="left:1297.40px;top:925.00px;font-size:22px;color:#6b7280;letter-spacing:0.240px;">Philippines</div>
<div style="position:absolute;left:1575.60px;top:919.20px;width:119.30px;height:34.40px;box-sizing:border-box;background:#fafafa;border:1.6px solid #d9d9d9;border-radius:5px;"></div>
<div class="t" style="left:1592.15px;top:927.00px;font-size:19.5px;color:#1f1f1f;letter-spacing:0.637px;">Exploring</div>
<div class="t" style="left:1828.30px;top:926.00px;font-size:22px;color:#6b7280;">1</div>
<div style="position:absolute;left:1970.00px;top:919.00px;width:119.30px;height:34.60px;box-sizing:border-box;background:#fff1f0;border:1.6px solid #ffa39e;border-radius:7px;"></div>
<div class="t" style="left:2004.20px;top:927.00px;font-size:19.3px;color:#cf1322;transform:scaleX(0.8912);transform-origin:0.00px 0;">WEAK</div>
<div style="position:absolute;left:124px;top:333.2px;width:84px;height:84px;border-radius:50%;background:rgba(220,60,140,0.25);"></div>
<div style="position:absolute;left:15.00px;top:336.50px;width:298.70px;height:73.50px;box-sizing:border-box;border:5px solid #d7374a;"></div>
</body></html>
